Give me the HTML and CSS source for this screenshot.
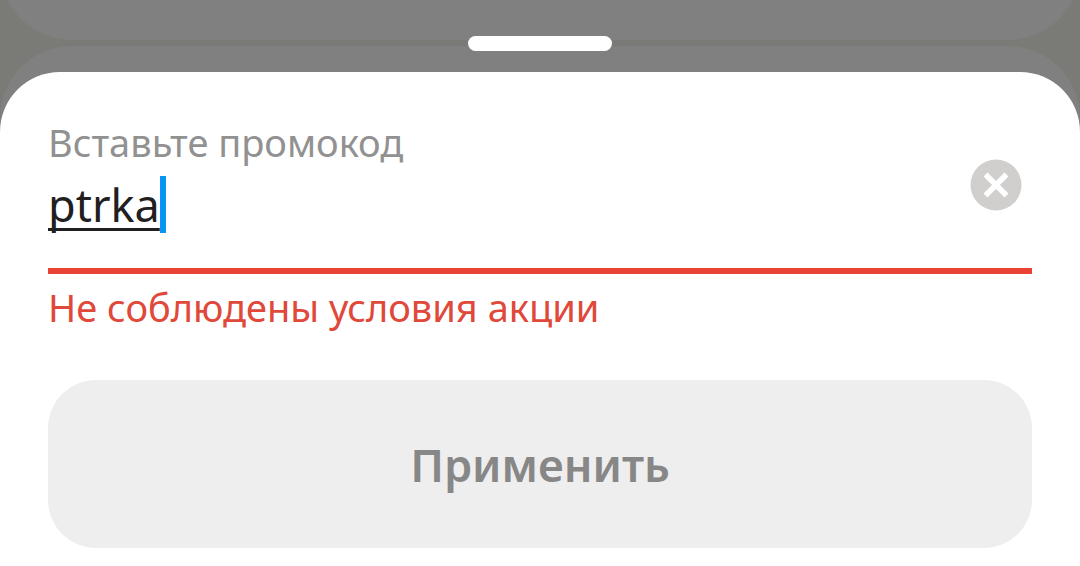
FILE: index.html
```html
<!DOCTYPE html>
<html lang="ru">
<head>
    <meta charset="UTF-8">
    <meta name="viewport" content="width=device-width, initial-scale=1.0">
    <title>Промокод</title>
    <link rel="stylesheet" href="styles.css">
</head>
<body>
    <!-- Dimmed cards behind the sheet -->
    <div class="backdrop">
        <div class="card card-top"></div>
        <div class="card card-bottom"></div>
    </div>

    <main class="overlay">
        <div class="handle"></div>
        <form class="sheet">
            <div class="field">
                <div class="field-text">
                    <label for="promo">Вставьте промокод</label>
                    <div class="entry">
                        <input id="promo" type="text" value="ptrka" spellcheck="false" autocomplete="off" aria-invalid="true" aria-describedby="promo-error">
                        <span class="caret"></span>
                    </div>
                </div>
                <button class="clear" type="button" aria-label="Очистить">
                    <svg viewBox="0 0 52 52" width="52" height="52">
                        <circle cx="26" cy="26" r="25.5" fill="#d0cfce"/>
                        <path d="M15.5 15.5L36.5 36.5M36.5 15.5L15.5 36.5" stroke="#fff" stroke-width="5.5"/>
                    </svg>
                </button>
            </div>
            <p class="error" id="promo-error">Не соблюдены условия акции</p>
            <button class="apply" type="submit" disabled>Применить</button>
        </form>
    </main>
</body>
</html>
```

FILE: styles.css
```css
* {
    box-sizing: border-box;
}

body {
    margin: 0;
    background-color: #7a7a76;
    font-family: "Noto Sans", "Open Sans", sans-serif;
}

.backdrop {
    position: absolute;
    inset: 0;
    display: flex;
    flex-direction: column;
    gap: 6px;
    overflow: hidden;
}

.card {
    background-color: #808080;
}

.card-top {
    flex: none;
    height: 144px;
    margin-top: -104px;
    border-radius: 72px;
}

.card-bottom {
    flex: 1;
    border-radius: 72px 72px 0 0;
}

.overlay {
    position: relative;
    display: flex;
    flex-direction: column;
    min-height: 100vh;
    padding-top: 36px;
}

.handle {
    align-self: center;
    width: 144px;
    height: 15px;
    margin-bottom: 21px;
    background-color: white;
    border-radius: 8px;
}

.sheet {
    flex: 1;
    padding: 46px 48px 18px;
    background-color: white;
    border-radius: 60px 60px 0 0;
}

.field {
    display: flex;
    align-items: flex-start;
    justify-content: space-between;
    padding-bottom: 35px;
    border-bottom: 6px solid #ea4335;
}

.field-text {
    flex: 1;
}

.field label {
    display: block;
    font-size: 38px;
    line-height: 48px;
    color: #919191;
}

.entry {
    display: flex;
    align-items: center;
    margin-top: 10px;
}

.entry input {
    field-sizing: content;
    height: 57px;
    padding: 0;
    border: none;
    outline: none;
    background: none;
    font-family: inherit;
    font-size: 45px;
    line-height: 57px;
    color: #21201f;
    text-decoration: underline;
    text-decoration-thickness: 3px;
    text-decoration-skip-ink: none;
    text-underline-offset: 6px;
}

.caret {
    width: 6px;
    height: 57px;
    background-color: #0a95f5;
}

.clear {
    margin: 41px 10px 0 0;
    padding: 0;
    border: none;
    background: none;
}

.clear svg {
    display: block;
}

.error {
    margin: 9px 0 49px;
    font-size: 38px;
    line-height: 48px;
    color: #e0483a;
}

.apply {
    display: block;
    width: 100%;
    height: 168px;
    border: none;
    border-radius: 48px;
    background-color: #eeeeee;
    font-family: inherit;
    font-size: 45px;
    font-weight: 600;
    color: #878787;
}
```
